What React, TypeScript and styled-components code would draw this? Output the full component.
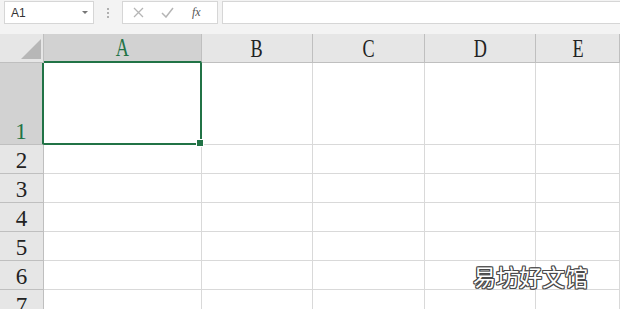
import React from 'react'
import styled, { createGlobalStyle } from 'styled-components'

const colors = {
  green: '#217346',
  grid: '#d9d9d9',
  header: '#e6e6e6',
  headerSel: '#d2d2d2',
  headerLine: '#bfbfbf',
  bar: '#f3f3f3',
  box: '#d6d6d6',
  icon: '#b5b5b5'
}

const columns = ['A', 'B', 'C', 'D', 'E']
const rows = [1, 2, 3, 4, 5, 6, 7]

const GlobalStyle = createGlobalStyle`
html, body {
  margin: 0;
  padding: 0;
  background: #ffffff;
  overflow: hidden;
}
`

const Sheet = styled.div`
position: relative;
width: 620px;
height: 309px;
overflow: hidden;
font-family: "Liberation Sans", Arial, sans-serif;
`

const FormulaBar = styled.div`
height: 34px;
background: ${colors.bar};
display: flex;
align-items: flex-start;
padding: 1px 0 0 4px;
box-sizing: border-box;
`

const NameBox = styled.div`
width: 90px;
height: 23px;
box-sizing: border-box;
background: #fff;
border: 1px solid ${colors.box};
display: flex;
align-items: center;
justify-content: space-between;
padding: 0 5px 0 6px;
font-size: 12px;
color: #333;
`

const Caret = styled.span`
width: 0;
height: 0;
border-left: 3px solid transparent;
border-right: 3px solid transparent;
border-top: 3px solid #777;
`

const Grip = styled.div`
width: 28px;
height: 23px;
display: flex;
flex-direction: column;
align-items: center;
justify-content: center;
gap: 2px;
span {
  width: 2px;
  height: 2px;
  background: #b0b0b0;
}
`

const FnBox = styled.div`
width: 96px;
height: 23px;
box-sizing: border-box;
background: #fff;
border: 1px solid ${colors.box};
display: flex;
align-items: center;
padding: 0 0 0 10px;
gap: 17px;
`

const Fx = styled.span`
font-family: "Liberation Serif", serif;
font-style: italic;
font-size: 12px;
color: #555;
margin-left: 1px;
`

const Input = styled.div`
flex: 1;
height: 23px;
box-sizing: border-box;
margin-left: 4px;
background: #fff;
border: 1px solid ${colors.box};
border-right: none;
`

const Grid = styled.div`
display: grid;
grid-template-columns: 44px 158px 111px 112px 111px 84px;
grid-template-rows: 29px 82px repeat(6, 29px);
`

const Corner = styled.div`
position: relative;
background: ${colors.header};
border-right: 1px solid ${colors.headerLine};
border-bottom: 1px solid ${colors.headerLine};
box-sizing: border-box;
`

const CornerTriangle = styled.svg`
position: absolute;
right: 2px;
bottom: 3px;
`

type HeadProps = {
  selected?: boolean;
}

const ColHead = styled.div<HeadProps>`
background: ${props => (props.selected ? colors.headerSel : colors.header)};
border-right: 1px solid ${colors.headerLine};
border-bottom: ${props => (props.selected ? `2px solid ${colors.green}` : `1px solid ${colors.headerLine}`)};
box-sizing: border-box;
display: flex;
align-items: flex-end;
justify-content: center;
font-family: "Liberation Serif", "DejaVu Serif", serif;
font-size: 26px;
line-height: 26px;
color: ${props => (props.selected ? colors.green : '#222')};
`

const Letter = styled.span`
display: inline-block;
transform: scaleX(0.7);
`

const RowHead = styled.div<HeadProps>`
background: ${props => (props.selected ? colors.headerSel : colors.header)};
border-right: ${props => (props.selected ? `2px solid ${colors.green}` : `1px solid ${colors.headerLine}`)};
border-bottom: 1px solid ${colors.headerLine};
box-sizing: border-box;
display: flex;
align-items: flex-end;
justify-content: center;
font-family: "Liberation Serif", "DejaVu Serif", serif;
font-size: 23px;
line-height: 25px;
color: ${props => (props.selected ? colors.green : '#222')};
`

const Cell = styled.div<HeadProps>`
position: relative;
box-sizing: border-box;
border-right: ${props => (props.selected ? `2px solid ${colors.green}` : `1px solid ${colors.grid}`)};
border-bottom: ${props => (props.selected ? `2px solid ${colors.green}` : `1px solid ${colors.grid}`)};
`

const Handle = styled.span`
position: absolute;
right: -4px;
bottom: -4px;
width: 6px;
height: 6px;
background: ${colors.green};
border: 1px solid #fff;
z-index: 2;
`

const Watermark = styled.div`
position: absolute;
left: 473px;
top: 259px;
font-family: "Noto Sans CJK SC", sans-serif;
font-size: 23px;
color: #ffffff;
text-shadow:
  1px 0 0 #4a4a4a, -1px 0 0 #4a4a4a, 0 1px 0 #4a4a4a, 0 -1px 0 #4a4a4a,
  1px 1px 0 #4a4a4a, -1px -1px 0 #4a4a4a, 1px -1px 0 #4a4a4a, -1px 1px 0 #4a4a4a;
`

const App = () => {
  return (
    <Sheet>
      <GlobalStyle />
      <FormulaBar>
        <NameBox>
          A1
          <Caret />
        </NameBox>
        <Grip>
          <span />
          <span />
          <span />
        </Grip>
        <FnBox>
          <svg width="11" height="11" viewBox="0 0 11 11">
            <path d="M1 1 L10 10 M10 1 L1 10" stroke={colors.icon} strokeWidth="1.3" fill="none" />
          </svg>
          <svg width="13" height="11" viewBox="0 0 13 11">
            <path d="M1 6 L5 10 L12 1" stroke={colors.icon} strokeWidth="1.5" fill="none" />
          </svg>
          <Fx>fx</Fx>
        </FnBox>
        <Input />
      </FormulaBar>
      <Grid>
        <Corner>
          <CornerTriangle width="20" height="20" viewBox="0 0 20 20">
            <polygon points="20,0 20,20 0,20" fill="#b7b7b7" />
          </CornerTriangle>
        </Corner>
        {columns.map(c => (
          <ColHead key={c} selected={c === 'A'}>
            <Letter>{c}</Letter>
          </ColHead>
        ))}
        {rows.map(r => (
          <React.Fragment key={r}>
            <RowHead selected={r === 1}>{r}</RowHead>
            {columns.map(c => (
              <Cell key={c} selected={r === 1 && c === 'A'}>
                {r === 1 && c === 'A' && <Handle />}
              </Cell>
            ))}
          </React.Fragment>
        ))}
      </Grid>
      <Watermark>易坊好文馆</Watermark>
    </Sheet>
  )
}

export default App
